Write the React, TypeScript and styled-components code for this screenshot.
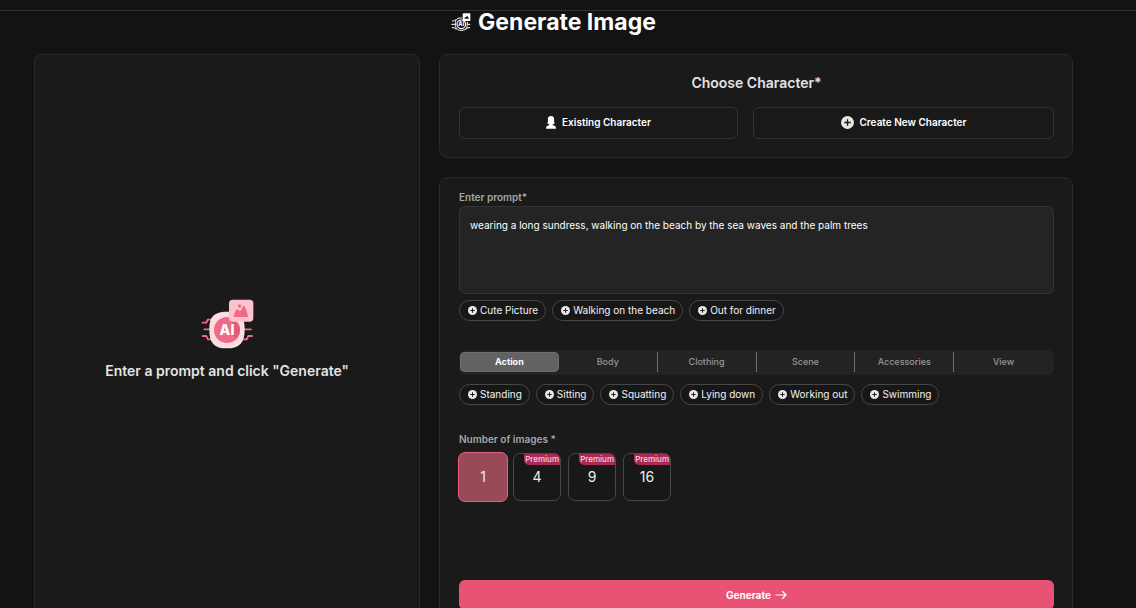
import React, { useState } from "react";
import styled, { createGlobalStyle } from "styled-components";

const GlobalStyle = createGlobalStyle`
  *, *::before, *::after { box-sizing: border-box; }
  html { scrollbar-width: none; background: #131313; }
  body {
    margin: 0;
    background: #131313;
    color: #fff;
    font-family: Inter, "Liberation Sans", sans-serif;
    font-size: 10px;
  }
  button, textarea, input { font: inherit; color: inherit; }
  button { cursor: pointer; }
`;

const TopBar = styled.header`
  height: 11px;
  border-bottom: 1px solid #303030;
`;

const Page = styled.main`
  padding: 0 63px 20px 34px;
`;

const PageTitle = styled.h1`
  display: flex;
  align-items: center;
  justify-content: center;
  gap: 7px;
  margin: 0 0 21px;
  font-size: 23px;
  line-height: 22px;
  font-weight: 700;
`;

const Columns = styled.div`
  display: grid;
  grid-template-columns: 386fr 634fr;
  gap: 19px;
`;

const Panel = styled.section`
  background: #1a1a1a;
  border: 1px solid #292929;
  border-radius: 8px;
`;

const Preview = styled(Panel)`
  display: flex;
  flex-direction: column;
  align-items: center;
  padding-top: 244px;
`;

const PreviewHint = styled.p`
  margin: 11px 0 0;
  color: #e3e3e3;
  font-size: 14px;
  line-height: 22px;
  font-weight: 600;
`;

const Form = styled.form`
  display: flex;
  flex-direction: column;
  gap: 19px;
`;

const FormPanel = styled(Panel)`
  padding: 11px 18px 19px 19px;
`;

const CharacterPanel = styled(Panel)`
  padding: 18px 18px 18px 19px;
`;

const PanelTitle = styled.h2`
  margin: 0 0 14px;
  color: #e3e3e3;
  font-size: 14px;
  line-height: 20px;
  font-weight: 600;
  text-align: center;
`;

const CharacterOptions = styled.div`
  display: grid;
  grid-template-columns: 279fr 301fr;
  gap: 15px;
`;

const CharacterButton = styled.button`
  display: flex;
  align-items: center;
  justify-content: center;
  gap: 6px;
  height: 32px;
  padding: 0 0 2px;
  background: #191919;
  border: 1px solid #343434;
  border-radius: 6px;
  font-weight: 600;
`;

const FieldLabel = styled.label`
  display: block;
  color: #a6a6a6;
  font-size: 10px;
  line-height: 16px;
  font-weight: 600;
`;

const PromptBox = styled.textarea`
  display: block;
  width: 100%;
  height: 88px;
  margin: 1px 0 6px;
  padding: 10px;
  resize: none;
  outline: none;
  background: #242424;
  border: 1px solid #343434;
  border-radius: 6px;
  font-weight: 400;
  line-height: 16px;
`;

const ChipRow = styled.div`
  display: flex;
  flex-wrap: wrap;
  gap: 6px;
`;

const Chip = styled.button`
  display: flex;
  align-items: center;
  gap: 3px;
  height: 21px;
  padding: 0 7px 1px 8px;
  background: #171717;
  border: 1px solid #484848;
  border-radius: 11px;
  color: #f2f2f2;
  font-weight: 400;
  white-space: nowrap;
`;

const TabList = styled.div`
  display: grid;
  grid-template-columns: repeat(6, 1fr);
  margin: 29px 0 9px;
  padding: 2px 1px 3px;
  background: #232323;
  border-radius: 6px;
`;

const Tab = styled.button<{ $active: boolean; $divider: boolean }>`
  height: 20px;
  padding: 0 0 2px;
  background: ${(p) => (p.$active ? "#626262" : "transparent")};
  border: 0 solid #6e6e6e;
  border-right-width: ${(p) => (p.$divider ? "1px" : "0")};
  border-radius: ${(p) => (p.$active ? "5px" : "0")};
  box-shadow: ${(p) => (p.$active ? "inset 0 0 0 1px #6e6e6e" : "none")};
  color: ${(p) => (p.$active ? "#fff" : "#979797")};
  font-size: 9px;
  font-weight: ${(p) => (p.$active ? 700 : 500)};
`;

const CountGroup = styled.fieldset`
  margin: 26px 0 79px;
  padding: 0;
  border: 0;
`;

const CountLegend = styled.legend`
  padding: 0;
  color: #a6a6a6;
  font-size: 10px;
  line-height: 16px;
  font-weight: 600;
`;

const CountRow = styled.div`
  display: flex;
  gap: 7px;
  margin-top: 6px;
`;

const CountOption = styled.label<{ $selected: boolean }>`
  position: relative;
  display: flex;
  align-items: center;
  justify-content: center;
  width: ${(p) => (p.$selected ? "50px" : "48px")};
  height: ${(p) => (p.$selected ? "50px" : "48px")};
  margin: ${(p) => (p.$selected ? "-1px -2px -1px -1px" : "0")};
  padding-bottom: 2px;
  background: ${(p) => (p.$selected ? "#984a59" : "#181818")};
  border: 1px solid ${(p) => (p.$selected ? "#e8607f" : "#484848")};
  border-radius: 7px;
  color: #ececec;
  font-size: 14px;
  cursor: pointer;
`;

const HiddenRadio = styled.input`
  position: absolute;
  inset: 0;
  width: 100%;
  height: 100%;
  margin: 0;
  opacity: 0;
  cursor: pointer;
`;

const PremiumBadge = styled.span`
  position: absolute;
  top: 0;
  right: 0;
  padding: 0 1px;
  background: #a92b55;
  border-radius: 0 5px 0 5px;
  color: #f3d5de;
  font-size: 8px;
  line-height: 11px;
  font-weight: 500;
`;

const GenerateButton = styled.button`
  display: flex;
  align-items: center;
  justify-content: center;
  gap: 4px;
  width: 100%;
  height: 30px;
  padding: 0;
  background: #e75275;
  border: 0;
  border-radius: 6px;
  font-weight: 700;
`;

const Drawing = styled.svg`
  display: block;
  flex: none;
`;

function PlusCircle({ size }: { size: number }) {
  return (
    <Drawing width={size} height={size} viewBox="0 0 24 24" aria-hidden="true">
      <circle cx="12" cy="12" r="12" fill="#e8e8e8" />
      <path d="M12 6v12M6 12h12" stroke="#1a1a1a" strokeWidth="2.6" />
    </Drawing>
  );
}

function PersonIcon() {
  return (
    <Drawing width="10" height="13" viewBox="0 0 20 26" aria-hidden="true">
      <path
        fill="#fff"
        d="M10 0C5.500 0 3.500 3 3.700 7c.1 3 .4 5-1 8 1.200 1 2.300 1.500 4 1.700v1.300C3 19 0 20 0 25.500h20c0-5.500-3-6.500-6.700-7.500v-1.300c1.700-.2 2.800-.7 4-1.700-1.400-3-1.100-5-1-8C16.500 3 14.500 0 10 0z"
      />
    </Drawing>
  );
}

function ArrowIcon() {
  return (
    <Drawing width="12" height="10" viewBox="0 0 12 10" fill="none" aria-hidden="true">
      <path
        d="M1 5h10M7.500 1.500 11 5 7.500 8.500"
        stroke="#fff"
        strokeWidth="1.200"
        strokeLinecap="round"
        strokeLinejoin="round"
      />
    </Drawing>
  );
}

function TitleIcon() {
  return (
    <Drawing width="20" height="20" viewBox="0 0 60 60" fill="none" aria-hidden="true">
      <g stroke="#fff" strokeWidth="3">
        <path d="M3 27h5l3-3h4M1 37h11M3 47h7l3 4h4M58 37h-9M57 47h-7l-3 4h-4" />
        <path d="M33 18h-5c-11 0-15 6-15 18s4 19 18 19 18-7 18-19v-6" />
        <circle cx="31" cy="37" r="13" strokeWidth="3.500" />
      </g>
      <path
        fill="#fff"
        fillRule="evenodd"
        d="M38 4h17a3 3 0 0 1 3 3v17a3 3 0 0 1-3 3H38a3 3 0 0 1-3-3V7a3 3 0 0 1 3-3zm2 16h14l-5-9-4 5-2-2z"
      />
      <text
        x="31"
        y="43"
        fill="#fff"
        fontFamily="Inter, sans-serif"
        fontSize="17"
        fontWeight="800"
        textAnchor="middle"
      >
        AI
      </text>
    </Drawing>
  );
}

function PreviewIcon() {
  return (
    <Drawing width="53" height="50" viewBox="0 0 159 150" aria-hidden="true">
      <g fill="none" stroke="#ee6a86" strokeWidth="5.500" strokeLinejoin="round" strokeLinecap="round">
        <path d="M5 71h11l4-9h10M10 91h22M5 111h11l5 10h12M150 91h-22M153 111h-11l-5 10h-12" />
      </g>
      <path
        fill="#fddde3"
        d="M78 38c22 0 37 2 44 12 7 9 9 25 9 42 0 38-14 56-53 56s-53-16-53-56c0-34 9-54 53-54z"
      />
      <circle cx="78" cy="93" r="39" fill="#ee6a86" />
      <path fill="#d8506f" d="M92 62l21 13c8 16 4 34-7 46L92 106z" opacity=".55" />
      <text
        x="78"
        y="107"
        fill="#fff"
        fontFamily="Inter, sans-serif"
        fontSize="42"
        fontWeight="800"
        textAnchor="middle"
      >
        AI
      </text>
      <rect x="84" y="2" width="73" height="66" rx="11" fill="#fcc3cf" />
      <circle cx="116" cy="21" r="5" fill="#ee6a86" />
      <path
        fill="#ee6a86"
        d="M98 54c2-10 7-23 11-23 4 0 5 6 8 6 4 0 6-16 11-16s11 20 13 33z"
      />
    </Drawing>
  );
}

const prompts = ["Cute Picture", "Walking on the beach", "Out for dinner"];
const tabs = ["Action", "Body", "Clothing", "Scene", "Accessories", "View"];
const actions = ["Standing", "Sitting", "Squatting", "Lying down", "Working out", "Swimming"];
const counts = [1, 4, 9, 16];

function Chips({ items }: { items: string[] }) {
  return (
    <ChipRow>
      {items.map((item) => (
        <Chip key={item} type="button">
          <PlusCircle size={9} />
          {item}
        </Chip>
      ))}
    </ChipRow>
  );
}

export default function App() {
  const [tab, setTab] = useState("Action");
  const [count, setCount] = useState(1);
  const [prompt, setPrompt] = useState(
    "wearing a long sundress, walking on the beach by the sea waves and the palm trees"
  );

  return (
    <>
      <GlobalStyle />
      <TopBar />
      <Page>
        <PageTitle>
          <TitleIcon />
          Generate Image
        </PageTitle>
        <Columns>
          <Preview>
            <PreviewIcon />
            <PreviewHint>Enter a prompt and click "Generate"</PreviewHint>
          </Preview>
          <Form onSubmit={(e) => e.preventDefault()}>
            <CharacterPanel>
              <PanelTitle>Choose Character*</PanelTitle>
              <CharacterOptions>
                <CharacterButton type="button">
                  <PersonIcon />
                  Existing Character
                </CharacterButton>
                <CharacterButton type="button">
                  <PlusCircle size={13} />
                  Create New Character
                </CharacterButton>
              </CharacterOptions>
            </CharacterPanel>
            <FormPanel>
              <FieldLabel htmlFor="prompt">Enter prompt*</FieldLabel>
              <PromptBox
                id="prompt"
                spellCheck={false}
                value={prompt}
                onChange={(e) => setPrompt(e.target.value)}
              />
              <Chips items={prompts} />
              <TabList role="tablist">
                {tabs.map((name, i) => (
                  <Tab
                    key={name}
                    type="button"
                    role="tab"
                    aria-selected={tab === name}
                    $active={tab === name}
                    $divider={tab !== name && i < tabs.length - 1}
                    onClick={() => setTab(name)}
                  >
                    {name}
                  </Tab>
                ))}
              </TabList>
              <Chips items={actions} />
              <CountGroup>
                <CountLegend>Number of images *</CountLegend>
                <CountRow>
                  {counts.map((n) => (
                    <CountOption key={n} $selected={count === n}>
                      <HiddenRadio
                        type="radio"
                        name="count"
                        value={n}
                        checked={count === n}
                        onChange={() => setCount(n)}
                      />
                      {n}
                      {n > 1 && <PremiumBadge>Premium</PremiumBadge>}
                    </CountOption>
                  ))}
                </CountRow>
              </CountGroup>
              <GenerateButton type="submit">
                Generate
                <ArrowIcon />
              </GenerateButton>
            </FormPanel>
          </Form>
        </Columns>
      </Page>
    </>
  );
}
